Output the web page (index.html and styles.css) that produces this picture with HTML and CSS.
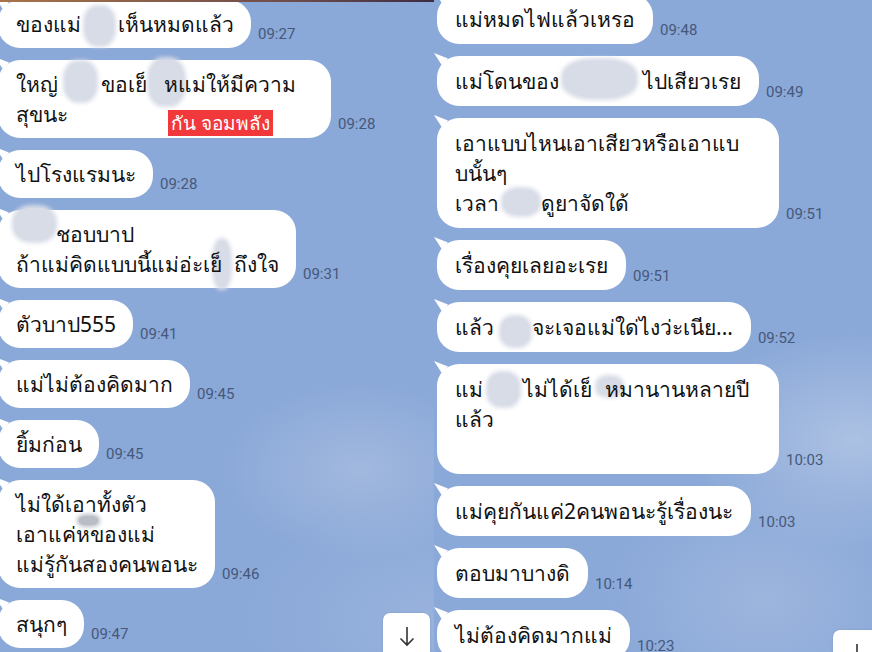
FILE: index.html
```html
<!DOCTYPE html>
<html lang="th">
<head>
    <meta charset="UTF-8">
    <meta name="viewport" content="width=device-width, initial-scale=1.0">
    <title>LINE chat</title>
    <link rel="stylesheet" href="styles.css">
</head>
<body>
    <div class="screen">
        <section class="chat chat-left">
            <div class="list">
                <div class="msg">
                    <div class="bubble">ของแม่<span class="blur lb1"></span>เห็นหมดแล้ว</div>
                    <span class="time">09:27</span>
                </div>
                <div class="msg">
                    <div class="bubble wrap-left">ใหญ่<span class="blur lb2a"></span>ขอเย็<span class="blur lb2b"></span>หแม่ให้มีความ<br>สุขนะ
                        <span class="sticker">กัน จอมพลัง</span>
                    </div>
                    <span class="time">09:28</span>
                </div>
                <div class="msg">
                    <div class="bubble">ไปโรงแรมนะ</div>
                    <span class="time">09:28</span>
                </div>
                <div class="msg">
                    <div class="bubble"><span class="blur lb4a"></span>ชอบบาป<br>ถ้าแม่คิดแบบนี้แม่อ่ะเย็<span class="blur lb4b"></span>ถึงใจ</div>
                    <span class="time">09:31</span>
                </div>
                <div class="msg">
                    <div class="bubble">ตัวบาป555</div>
                    <span class="time">09:41</span>
                </div>
                <div class="msg">
                    <div class="bubble">แม่ไม่ต้องคิดมาก</div>
                    <span class="time">09:45</span>
                </div>
                <div class="msg">
                    <div class="bubble">ยิ้มก่อน</div>
                    <span class="time">09:45</span>
                </div>
                <div class="msg">
                    <div class="bubble">ไม่ใด้เอาทั้งตัว<br>เอาแค่<span class="blur lb8"></span>หของแม่<br>แม่รู้กันสองคนพอนะ</div>
                    <span class="time">09:46</span>
                </div>
                <div class="msg">
                    <div class="bubble">สนุกๆ</div>
                    <span class="time">09:47</span>
                </div>
            </div>
            <div class="topline"></div>
            <button class="jump" aria-label="เลื่อนลง">
                <svg width="18" height="22" viewBox="0 0 18 22"><path d="M9 2V20M2.5 13.5L9 20l6.5-6.5" fill="none" stroke="#333" stroke-width="1.6"/></svg>
            </button>
        </section>

        <section class="chat chat-right">
            <div class="list">
                <div class="msg">
                    <div class="bubble">แม่หมดไฟแล้วเหรอ</div>
                    <span class="time">09:48</span>
                </div>
                <div class="msg">
                    <div class="bubble">แม่โดนของ<span class="blur rb2"></span>ไปเสียวเรย</div>
                    <span class="time">09:49</span>
                </div>
                <div class="msg">
                    <div class="bubble wrap-right">เอาแบบไหนเอาเสียวหรือเอาแบ<br>บนั้นๆ<br>เวลา<span class="blur rb3"></span>ดูยาจัดใด้</div>
                    <span class="time">09:51</span>
                </div>
                <div class="msg">
                    <div class="bubble">เรื่องคุยเลยอะเรย</div>
                    <span class="time">09:51</span>
                </div>
                <div class="msg">
                    <div class="bubble">แล้ว<span class="blur rb5"></span>จะเจอแม่ใด่ไงว่ะเนีย...</div>
                    <span class="time">09:52</span>
                </div>
                <div class="msg">
                    <div class="bubble wrap-right">แม่<span class="blur rb6a"></span>ไม่ได้เย็<span class="blur rb6b"></span>หมานานหลายปี<br>แล้ว<br>&nbsp;</div>
                    <span class="time">10:03</span>
                </div>
                <div class="msg">
                    <div class="bubble">แม่คุยกันแค่2คนพอนะรู้เรื่องนะ</div>
                    <span class="time">10:03</span>
                </div>
                <div class="msg">
                    <div class="bubble">ตอบมาบางดิ</div>
                    <span class="time">10:14</span>
                </div>
                <div class="msg">
                    <div class="bubble">ไม่ต้องคิดมากแม่</div>
                    <span class="time">10:23</span>
                </div>
            </div>
            <button class="jump" aria-label="เลื่อนลง">
                <svg width="18" height="22" viewBox="0 0 18 22"><path d="M9 2V20M2.5 13.5L9 20l6.5-6.5" fill="none" stroke="#333" stroke-width="1.6"/></svg>
            </button>
        </section>
    </div>
</body>
</html>
```

FILE: styles.css
```css
body {
    margin: 0;
    background: #8aa8d8;
    font-family: "Noto Sans", "DejaVu Sans", sans-serif;
}

.screen {
    width: 872px;
    height: 652px;
    display: flex;
    overflow: hidden;
}

.chat {
    position: relative;
    overflow: hidden;
    background-color: #8aa8d8;
}

.chat-left {
    width: 434px;
    background-image:
        radial-gradient(ellipse 140px 90px at 360px 470px, rgba(190, 205, 230, 0.45), transparent),
        radial-gradient(ellipse 200px 120px at 440px 620px, rgba(180, 198, 228, 0.35), transparent);
}

.chat-right {
    flex: 1;
    background-image:
        radial-gradient(ellipse 170px 110px at 420px 440px, rgba(200, 214, 236, 0.55), transparent),
        radial-gradient(ellipse 160px 120px at 330px 600px, rgba(185, 202, 230, 0.4), transparent);
}

.topline {
    position: absolute;
    top: 0;
    left: 0;
    right: 0;
    height: 2px;
    background: linear-gradient(to right, #a7744a, #6b4a4a 70%, #3c2c44);
}

.list {
    display: flex;
    flex-direction: column;
    gap: 12px;
}

.chat-left .list {
    margin-left: -2px;
}

.chat-right .list {
    margin-top: -6px;
    padding-left: 3px;
}

.msg {
    display: flex;
    align-items: flex-end;
}

.bubble {
    position: relative;
    z-index: 0;
    box-sizing: border-box;
    background: #fff;
    color: #111;
    border-radius: 22px;
    padding: 9px 17px 9px 18px;
    font-size: 21px;
    line-height: 30px;
    white-space: nowrap;
}

.chat-right .bubble {
    padding: 10px 18px;
}

.bubble.wrap-left {
    width: 333px;
}

.bubble.wrap-right {
    width: 342px;
}

.bubble::before {
    content: "";
    position: absolute;
    left: -3px;
    top: -3px;
    width: 14px;
    height: 12px;
    background: #fff;
    clip-path: polygon(0 0, 100% 45%, 55% 100%);
}

.time {
    margin: 0 0 5px 7px;
    font-family: Roboto, "Liberation Sans", sans-serif;
    font-size: 15px;
    color: #46587a;
}

/* censored words: the span keeps the gap in the text, the smudge sits under the letters */
.blur {
    position: relative;
    display: inline-block;
    vertical-align: top;
    height: 30px;
}

.blur::before {
    content: "";
    position: absolute;
    z-index: -1;
    left: var(--l);
    top: var(--t);
    width: var(--w);
    height: var(--h);
    background: #d8dce7;
    border-radius: 40%;
    box-shadow: 0 0 4px 3px #d8dce7;
}

.lb1 { width: 37px; --l: 5px; --t: -1px; --w: 27px; --h: 36px; }
.lb2a { width: 43px; --l: 8px; --t: -6px; --w: 29px; --h: 37px; }
.lb2b { width: 17px; --l: 3px; --t: -9px; --w: 33px; --h: 44px; }
.lb4a { width: 40px; --l: -1px; --t: -11px; --w: 39px; --h: 32px; }
.lb4b { width: 12px; --l: -7px; --t: -8px; --w: 14px; --h: 46px; }
.lb8 { width: 0; --l: 3px; --t: -3px; --w: 19px; --h: 9px; }
.lb8::before { background: #b9bdc6; box-shadow: 0 0 4px 2px #b9bdc6; }
.rb2 { width: 84px; --l: 5px; --t: -5px; --w: 71px; --h: 36px; }
.rb3 { width: 42px; --l: 5px; --t: 2px; --w: 34px; --h: 24px; }
.rb5 { width: 38px; --l: 8px; --t: 6px; --w: 27px; --h: 27px; }
.rb6a { width: 40px; --l: 6px; --t: 0px; --w: 29px; --h: 31px; }
.rb6b { width: 13px; --l: 6px; --t: 4px; --w: 23px; --h: 17px; }

.sticker {
    position: absolute;
    left: 170px;
    top: 50px;
    padding: 0 3px;
    background: #f1383b;
    color: #fff;
    font-size: 19px;
    line-height: 26px;
}

.jump {
    position: absolute;
    width: 47px;
    height: 52px;
    padding: 12px 0 0;
    border: none;
    border-radius: 7px;
    background: #fff;
    box-shadow: 0 0 2px rgba(0, 0, 0, 0.15);
    display: flex;
    justify-content: center;
    align-items: flex-start;
}

.chat-left .jump {
    right: 4px;
    top: 613px;
}

.chat-right .jump {
    left: 399px;
    top: 630px;
}
```
